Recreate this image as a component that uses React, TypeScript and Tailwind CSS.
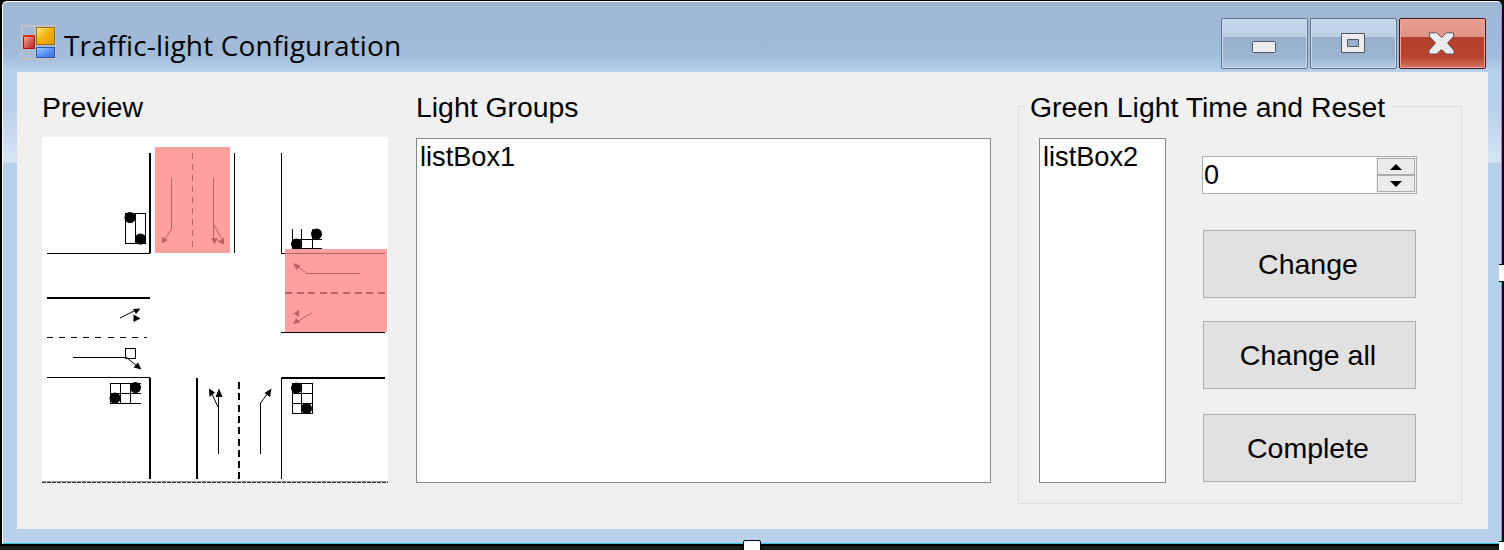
import type { ReactNode } from "react";

function FormIcon() {
  return (
    <svg width="36" height="36" viewBox="0 0 36 36" className="shrink-0" shapeRendering="crispEdges">
      <defs>
        <linearGradient id="gold" x1="0" y1="0" x2="1" y2="1">
          <stop offset="0" stopColor="#fff0a0" />
          <stop offset=".45" stopColor="#f0b410" />
          <stop offset="1" stopColor="#e09a00" />
        </linearGradient>
        <linearGradient id="red" x1="0" y1="0" x2="1" y2="1">
          <stop offset="0" stopColor="#f4b0a8" />
          <stop offset="1" stopColor="#c01818" />
        </linearGradient>
        <linearGradient id="blue" x1="0" y1="0" x2="1" y2="1">
          <stop offset="0" stopColor="#a8ccff" />
          <stop offset=".5" stopColor="#5c94f8" />
          <stop offset="1" stopColor="#3868d0" />
        </linearGradient>
      </defs>
      <path d="M0 1H34M1 0V34M0 33.5H34M34 1V34M14 1V34M1 24H14M7.5 24V34" fill="none" stroke="#c0c0c4" strokeWidth="2" />
      <rect x="2.5" y="10.5" width="11" height="13" fill="url(#red)" stroke="#a81010" />
      <path d="M2 10.5H14" stroke="#e02c10" strokeWidth="2" />
      <rect x="15.5" y="2.5" width="18" height="17" fill="url(#gold)" stroke="#9a7004" />
      <rect x="15.5" y="22.5" width="18" height="10" fill="url(#blue)" stroke="#2c58b0" />
    </svg>
  );
}

function Intersection() {
  return (
    <svg width="346" height="346" viewBox="42 137 346 346" className="block bg-white">
      <g stroke="#000" fill="none" shapeRendering="crispEdges">
        <path strokeWidth="2" d="M150 153V253M47 298H150M150 378V479M197 378V479M281 378H385" />
        <path d="M47 253.5H150M234.5 153V253M281.5 153V253.5H385M281 332.5H385M47 377.5H150M281.5 378V479" />
        <path d="M192.5 153V250" strokeDasharray="6 5" />
        <path d="M285 293H385" strokeWidth="2" strokeDasharray="7 4.6" />
        <path d="M47 337.5H147" strokeDasharray="6 6.1" />
        <path d="M239 382V479" strokeWidth="2" strokeDasharray="7 4.3" />
        <path d="M125.5 213.5H145.5V243.5H125.5ZM135.5 213.5V243.5" />
        <path d="M292.5 229V248.5H322M301.5 229V248.5M312.5 229V248.5M292 239.5H322" />
        <path d="M141 383.5H110.5V403.5H141M120.5 383.5V403.5M130.5 383.5V403.5M110 393.5H141" />
        <path d="M292.5 383.5H312.5V413.5H292.5ZM301.5 383.5V413.5M292 393.5H312M292 403.5H312" />
        <path d="M125.5 348.5H135.5V358.5H125.5Z" />
        <path d="M171.5 178V229M213.5 178V240M306 273.5H360M73 357.5H126M218.5 397V454M260.5 403V454" />
      </g>
      <g stroke="#000" fill="none">
        <path d="M171.5 229L165 239M213.5 224L221 238M307 273.5L297 266M312 313L298 321M120 318L136 310M126 357L137 366M218 407L212 394M260.5 403L268 393" />
      </g>
      <g>
        <path d="M162 243.5V237L168 240ZM211 238H218L214.5 244.5ZM217.5 241.5L224 237.5V244.5ZM293 263L300.5 265.5L296.5 270ZM299 310V317L293.5 313.5ZM293 324L296 318L300.5 322.5ZM133 309L140.5 308.5L136 314ZM133.5 314.5V322L140.5 318.5ZM133.5 367.5L138 362.5L141.5 369.5ZM209 388.5L215 392.5L209.5 397ZM215.5 397L219 388.5L222.5 397ZM264.5 393L271.5 388.5L270 397Z" />
        {[[130, 217.5], [140.5, 239], [316.5, 234], [296.5, 244], [135.5, 387.5], [115, 398], [296.5, 388], [306.5, 408.5]].map(([x, y]) => (
          <circle key={`${x}-${y}`} cx={x} cy={y} r="5.5" />
        ))}
      </g>
      <path d="M155 147H230V253H155ZM285 249H387V332H285Z" fill="#ff8080" fillOpacity=".75" shapeRendering="crispEdges" />
      <path d="M42 481.5H388" stroke="#a0a0a0" />
      <path d="M42 482.5H388" stroke="#303030" strokeDasharray="4 1" shapeRendering="crispEdges" />
    </svg>
  );
}

function CaptionButton({ close = false, children }: { close?: boolean; children: ReactNode }) {
  return (
    <button
      className={
        close
          ? "flex h-[51px] w-[87px] items-center justify-center rounded-[2px] border border-[#4a1220] bg-[linear-gradient(#e8a090_0px,#df9285_18px,#b5402b_18px,#b9452f_38px,#d0705c_48px)] pr-[2px] shadow-[inset_0_0_0_1px_#ecaa9c]"
          : "flex h-[51px] w-[87px] items-center justify-center rounded-[2px] border border-[#65748c] bg-[linear-gradient(#c4d6eb_0px,#bcd0e6_18px,#98afcc_18px,#9bb3cf_38px,#b4cae4_48px)] pr-[2px] shadow-[inset_0_0_0_1px_#ccdcf0]"
      }
    >
      {children}
    </button>
  );
}

function TitleBar() {
  return (
    <header className="flex h-[70px] shrink-0 items-start pr-[15px] pl-[18px]">
      <div className="flex pt-[23px]">
        <FormIcon />
      </div>
      <h1 className="ml-[7px] pt-[22px] font-['Open_Sans',sans-serif] text-[28px] leading-[42px] font-normal tracking-[0.16px] whitespace-nowrap">
        Traffic-light Configuration
      </h1>
      <div className="ml-auto flex gap-[2px] pt-[16px]">
        <CaptionButton>
          <svg width="24" height="12" viewBox="0 0 24 12" className="mt-[6px]">
            <rect x=".5" y=".5" width="23" height="11" rx="1" fill="#ececec" stroke="#505868" />
          </svg>
        </CaptionButton>
        <CaptionButton>
          <svg width="24" height="20" viewBox="0 0 24 20" className="-mt-px">
            <path fillRule="evenodd" d="M.5.5h23v19H.5ZM6.5 6.5v7h11v-7Z" fill="#ececec" stroke="#505868" />
          </svg>
        </CaptionButton>
        <CaptionButton close>
          <svg width="27" height="23" viewBox="0 0 27 23" className="-mt-px">
            <path d="M1.5.8H8.5L13.5 5.5L18.5 .8H25.500V4.5L19.5 11L26 18.5V22H18.5L13.5 17.5L8.5 22H1V18.5L7.5 11L1.5 4.5Z" fill="#ececec" stroke="#605060" strokeLinejoin="round" />
          </svg>
        </CaptionButton>
      </div>
    </header>
  );
}

function ActionButton({ children }: { children: ReactNode }) {
  return (
    <button className="flex h-[68px] w-[213px] items-center justify-center border border-[#adadad] bg-[#e1e1e1] pr-[3px] text-[28.5px]">
      {children}
    </button>
  );
}

function ListBox({ children, className }: { children: ReactNode; className: string }) {
  return (
    <div className={`h-[345px] border border-[#828790] bg-white pl-[3px] pt-[1px] text-[27.2px] leading-[34px] ${className}`}>
      {children}
    </div>
  );
}

function NumberField() {
  return (
    <div className="-ml-px flex h-[38px] w-[215px] border border-[#abadb3] bg-white">
      <span className="flex-1 pl-px text-[27px] leading-[36px]">0</span>
      <div className="flex w-[40px] flex-col bg-[#f0f0f0] p-px">
        <button className="flex h-[17px] w-[38px] items-center justify-center border border-[#acacac] bg-[#ebebeb]">
          <svg width="12" height="6" viewBox="0 0 12 6"><path d="M0 6L6 0L12 6Z" /></svg>
        </button>
        <button className="flex h-[17px] w-[38px] items-center justify-center border border-[#acacac] bg-[#ebebeb]">
          <svg width="12" height="6" viewBox="0 0 12 6"><path d="M0 0L6 6L12 0Z" /></svg>
        </button>
      </div>
    </div>
  );
}

export default function App() {
  return (
    <div className="relative h-[550px] w-[1504px] overflow-hidden bg-black pt-px pl-[2px] font-['Liberation_Sans',Arial,sans-serif] text-black">
      <div className="flex h-[543px] w-[1500px] flex-col rounded-t-[5px] border-t border-r border-b border-l border-t-white border-r-[#35c0dc] border-b-[#35c0dc] border-l-white bg-[linear-gradient(#9fb7d4_0px,#a0bad8_45px,#a3bedc_55px,#b9d1ea_70px,#b9cfea_105px,#d7e5f4_160px,#b9d0ea_161px)]">
        <TitleBar />
        <main className="ml-[14px] flex h-[457px] w-[1471px] bg-[#f0f0f0] pl-[25px]">
          <section className="w-[374px] pt-[18px]">
            <h2 className="h-[47px] text-[28.4px] leading-[34px]">Preview</h2>
            <Intersection />
          </section>
          <section className="w-[602px] pt-[18px]">
            <h2 className="h-[48px] text-[28.4px] leading-[34px]">Light Groups</h2>
            <ListBox className="w-[575px]">listBox1</ListBox>
          </section>
          <fieldset className="mt-[18px] h-[414px] w-[444px]">
            <div className="flex h-[16px] items-start">
              <span className="mt-[16px] h-px w-[8px] bg-[#dcdcdc]" />
              <legend className="h-[34px] pr-[7px] pl-[4px] text-[28.4px] leading-[34px] whitespace-nowrap">Green Light Time and Reset</legend>
              <span className="mt-[16px] h-px flex-1 bg-[#dcdcdc]" />
            </div>
            <div className="flex h-[398px] border-x border-b border-[#dcdcdc] pl-[20px] pt-[32px]">
              <ListBox className="w-[127px]">listBox2</ListBox>
              <div className="ml-[37px] flex flex-col pt-[18px]">
                <NumberField />
                <div className="mt-[36px] flex flex-col">
                  <ActionButton>Change</ActionButton>
                  <div className="h-[23px]" />
                  <ActionButton>Change all</ActionButton>
                  <div className="h-[25px]" />
                  <ActionButton>Complete</ActionButton>
                </div>
              </div>
            </div>
          </fieldset>
        </main>
      </div>
      <div className="h-[2px]" />
      <div className="-ml-[2px] h-[4px] bg-[#1a1a1b]" />
      <span className="absolute top-[540px] left-[743px] h-[12px] w-[18px] rounded-[2px] border border-black bg-white" />
      <span className="absolute top-[264px] left-[1499px] h-[18px] w-[8px] border-y border-black bg-white" />
      <span className="absolute top-[541px] left-[1499px] h-[9px] w-[5px] border-t border-black bg-white" />
    </div>
  );
}
